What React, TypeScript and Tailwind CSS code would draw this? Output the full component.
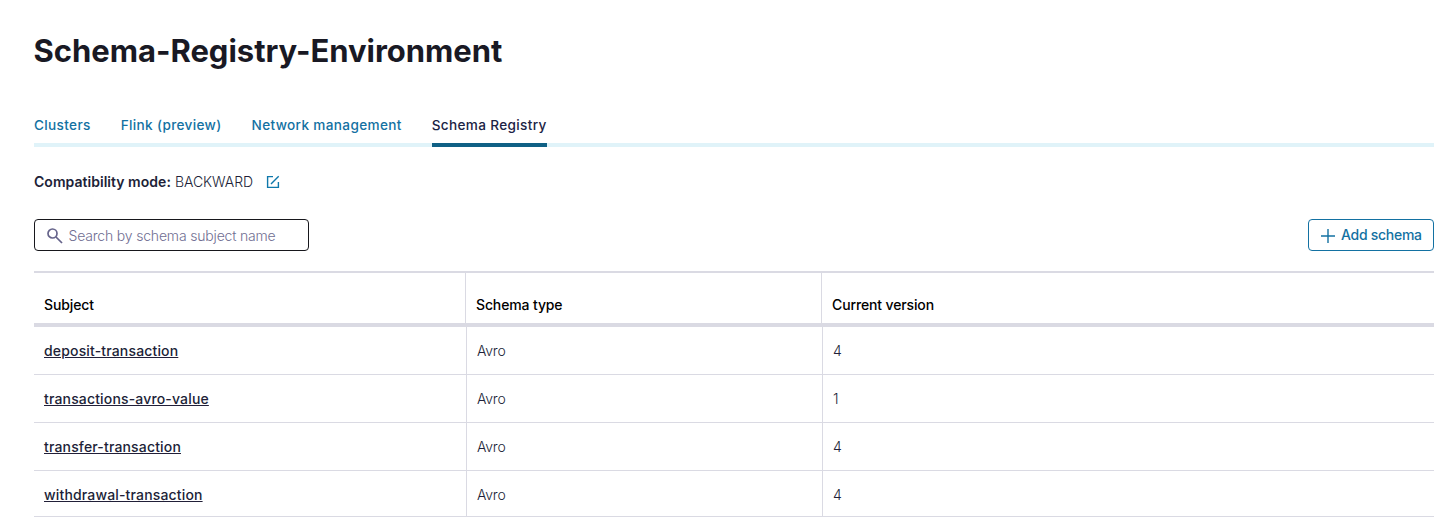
const tabs = ["Clusters", "Flink (preview)", "Network management", "Schema Registry"];
const rows: [string, string, string][] = [
  ["deposit-transaction", "Avro", "4"],
  ["transactions-avro-value", "Avro", "1"],
  ["transfer-transaction", "Avro", "4"],
  ["withdrawal-transaction", "Avro", "4"],
];

export default function App() {
  return (
    <main className="h-[531px] overflow-hidden bg-white pl-[34px] pr-[11px] pt-[31px] font-['Inter',sans-serif] text-[14px] text-[#211f38]">
      <h1 className="-ml-[0.5px] h-[40px] text-[31px] font-bold leading-[39px] tracking-[-0.02px] text-[#191924]">Schema-Registry-Environment</h1>
      <nav className="mt-[44px] flex h-[32px] gap-[30px] border-b-4 border-[#e0f3f9]">
        {tabs.map((t, i) => (
          <a key={t} className={"h-[32px] whitespace-nowrap text-[13.6px] font-medium leading-[20px] tracking-[0.34px] " + (i === 3 ? "border-b-4 border-[#0f6085] text-[#1b2344]" : "text-[#1371a2]")}>{t}</a>
        ))}
      </nav>
      <div className="mt-[24px] flex h-[20px] items-center">
        <span className="font-semibold tracking-[0.03px]">Compatibility mode:</span>
        <span className="ml-1 font-light tracking-[-0.04px]">BACKWARD</span>
        <svg className="relative top-px ml-[13px]" width="14" height="14" viewBox="0 0 14 14" fill="none" stroke="#0f78ab" strokeWidth="1.4"><path d="M7 1.6H1.6v10.8h10.8V7M12.7 1.3 5 9" /></svg>
      </div>
      <div className="mt-[28px] flex h-[32px] justify-between">
        <div className="flex w-[275px] items-center rounded-[4px] border border-[#17171c] pl-[12px]">
          <svg className="relative top-px" width="16" height="16" viewBox="0 0 16 16" fill="none" stroke="#65638a" strokeWidth="1.7"><circle cx="5.5" cy="5.5" r="4.5" /><path d="m9 9 6 6" /></svg>
          <span className="ml-[5.5px] font-light tracking-[-0.18px] text-[#706e92]">Search by schema subject name</span>
        </div>
        <button className="flex w-[126px] items-center rounded-[4px] border border-[#1371a2] pl-[12px] font-medium text-[#1371a2]">
          <svg className="relative top-px" width="14" height="14" viewBox="0 0 14 14" stroke="currentColor" strokeWidth="1.4"><path d="M7 0v14M0 7h14" /></svg>
          <span className="-mt-px ml-[6px] tracking-[-0.28px]">Add schema</span>
        </button>
      </div>
      <table className="mt-[20px] w-full table-fixed border-separate border-spacing-0 text-left">
        <colgroup><col className="w-[432px]" /><col className="w-[356px]" /><col /></colgroup>
        <thead><tr className="h-[56px]">
          {["Subject", "Schema type", "Current version"].map((h, i) => (
            <th key={h} className={"border-b-4 border-t-2 border-[#dadae3] px-[10px] pb-0 pt-[13px] font-medium tracking-[-0.13px] text-black " + (i < 2 ? "border-r" : "")}>{h}</th>
          ))}
        </tr></thead>
        <tbody>{rows.map((r, i) => (
          <tr key={r[0]} className={i === 3 ? "h-[46px]" : "h-[48px]"}>
            <td className={"border-b border-[#dadae3] px-[10px] font-medium tracking-[0.16px] underline " + (i === 3 ? "pt-[2px]" : "")}>{r[0]}</td>
            <td className={"border-b border-l border-[#dadae3] px-[10px] font-light tracking-[-0.2px] " + (i === 3 ? "pt-[2px]" : "")}>{r[1]}</td>
            <td className={"border-b border-l border-[#dadae3] px-[10px] font-light " + (i === 3 ? "pt-[2px]" : "")}>{r[2]}</td>
          </tr>
        ))}</tbody>
      </table>
    </main>
  );
}
